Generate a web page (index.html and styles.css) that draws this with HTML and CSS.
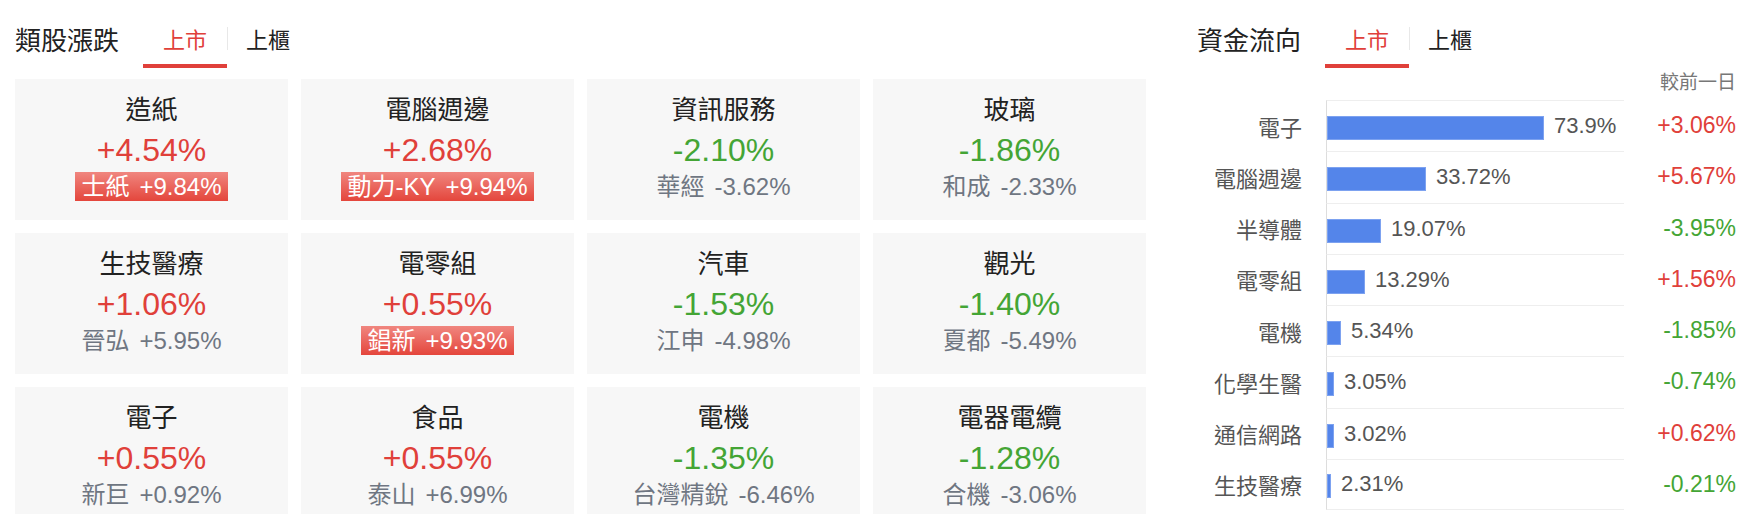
FILE: index.html
```html
<!DOCTYPE html>
<html>
<head>
	<title>類股漲跌</title>
	<meta charset="utf-8">
	<link rel="stylesheet" href="styles.css">
</head>
<body>

	<div class="boxPage">

		<!-- LEFT: sectors up / down -->
		<div class="boxSectorsPanel">

			<div class="boxHead">
				<div class="lblHeadTitle">類股漲跌</div>
				<div class="boxTabs">
					<span class="tab tabActive">上市</span>
					<span class="tabLine"></span>
					<span class="tab tabSecond">上櫃</span>
				</div>
			</div>

			<div class="boxSectors">

				<div class="boxSector">
					<div class="lblSectorName">造紙</div>
					<div class="lblSectorChange up">+4.54%</div>
					<div class="lblTopStock limitUp">士紙<span class="lblStockChange">+9.84%</span></div>
				</div>

				<div class="boxSector">
					<div class="lblSectorName">電腦週邊</div>
					<div class="lblSectorChange up">+2.68%</div>
					<div class="lblTopStock limitUp">動力-KY<span class="lblStockChange">+9.94%</span></div>
				</div>

				<div class="boxSector">
					<div class="lblSectorName">資訊服務</div>
					<div class="lblSectorChange down">-2.10%</div>
					<div class="lblTopStock">華經<span class="lblStockChange">-3.62%</span></div>
				</div>

				<div class="boxSector">
					<div class="lblSectorName">玻璃</div>
					<div class="lblSectorChange down">-1.86%</div>
					<div class="lblTopStock">和成<span class="lblStockChange">-2.33%</span></div>
				</div>

				<div class="boxSector">
					<div class="lblSectorName">生技醫療</div>
					<div class="lblSectorChange up">+1.06%</div>
					<div class="lblTopStock">晉弘<span class="lblStockChange">+5.95%</span></div>
				</div>

				<div class="boxSector">
					<div class="lblSectorName">電零組</div>
					<div class="lblSectorChange up">+0.55%</div>
					<div class="lblTopStock limitUp">錩新<span class="lblStockChange">+9.93%</span></div>
				</div>

				<div class="boxSector">
					<div class="lblSectorName">汽車</div>
					<div class="lblSectorChange down">-1.53%</div>
					<div class="lblTopStock">江申<span class="lblStockChange">-4.98%</span></div>
				</div>

				<div class="boxSector">
					<div class="lblSectorName">觀光</div>
					<div class="lblSectorChange down">-1.40%</div>
					<div class="lblTopStock">夏都<span class="lblStockChange">-5.49%</span></div>
				</div>

				<div class="boxSector">
					<div class="lblSectorName">電子</div>
					<div class="lblSectorChange up">+0.55%</div>
					<div class="lblTopStock">新巨<span class="lblStockChange">+0.92%</span></div>
				</div>

				<div class="boxSector">
					<div class="lblSectorName">食品</div>
					<div class="lblSectorChange up">+0.55%</div>
					<div class="lblTopStock">泰山<span class="lblStockChange">+6.99%</span></div>
				</div>

				<div class="boxSector">
					<div class="lblSectorName">電機</div>
					<div class="lblSectorChange down">-1.35%</div>
					<div class="lblTopStock">台灣精銳<span class="lblStockChange">-6.46%</span></div>
				</div>

				<div class="boxSector">
					<div class="lblSectorName">電器電纜</div>
					<div class="lblSectorChange down">-1.28%</div>
					<div class="lblTopStock">合機<span class="lblStockChange">-3.06%</span></div>
				</div>

			</div>
		</div>

		<!-- RIGHT: money flow -->
		<div class="boxFlowPanel">

			<div class="boxHead">
				<div class="lblHeadTitle">資金流向</div>
				<div class="boxTabs">
					<span class="tab tabActive">上市</span>
					<span class="tabLine"></span>
					<span class="tab tabSecond">上櫃</span>
				</div>
			</div>

			<div class="lblFlowHead">較前一日</div>

			<div class="boxFlow">

				<div class="flowRow">
					<span class="lblFlowName">電子</span>
					<div class="flowTrack"><span class="flowBar" style="width:217px"></span><span class="lblFlowPct">73.9%</span></div>
					<span class="lblFlowChange up">+3.06%</span>
				</div>

				<div class="flowRow">
					<span class="lblFlowName">電腦週邊</span>
					<div class="flowTrack"><span class="flowBar" style="width:99px"></span><span class="lblFlowPct">33.72%</span></div>
					<span class="lblFlowChange up">+5.67%</span>
				</div>

				<div class="flowRow">
					<span class="lblFlowName">半導體</span>
					<div class="flowTrack"><span class="flowBar" style="width:54px"></span><span class="lblFlowPct">19.07%</span></div>
					<span class="lblFlowChange down">-3.95%</span>
				</div>

				<div class="flowRow">
					<span class="lblFlowName">電零組</span>
					<div class="flowTrack"><span class="flowBar" style="width:38px"></span><span class="lblFlowPct">13.29%</span></div>
					<span class="lblFlowChange up">+1.56%</span>
				</div>

				<div class="flowRow">
					<span class="lblFlowName">電機</span>
					<div class="flowTrack"><span class="flowBar" style="width:14px"></span><span class="lblFlowPct">5.34%</span></div>
					<span class="lblFlowChange down">-1.85%</span>
				</div>

				<div class="flowRow">
					<span class="lblFlowName">化學生醫</span>
					<div class="flowTrack"><span class="flowBar" style="width:7px"></span><span class="lblFlowPct">3.05%</span></div>
					<span class="lblFlowChange down">-0.74%</span>
				</div>

				<div class="flowRow">
					<span class="lblFlowName">通信網路</span>
					<div class="flowTrack"><span class="flowBar" style="width:7px"></span><span class="lblFlowPct">3.02%</span></div>
					<span class="lblFlowChange up">+0.62%</span>
				</div>

				<div class="flowRow">
					<span class="lblFlowName">生技醫療</span>
					<div class="flowTrack"><span class="flowBar" style="width:4px"></span><span class="lblFlowPct">2.31%</span></div>
					<span class="lblFlowChange down">-0.21%</span>
				</div>

			</div>
		</div>

	</div>

</body>
</html>
```

FILE: styles.css
```css
*{
	margin: 0px;
	padding: 0px;
	box-sizing: border-box;
}

body{
	width: 100vw;
	height: 100vh;
	overflow: hidden;
	background-color: white;
	color: #222222;
	font-family: "Liberation Sans", "Noto Sans CJK TC", sans-serif;
}

.boxPage{
	display: flex;
	gap: 51px;
	padding: 0px 18px 0px 15px;
}

/* header with title + tabs */
.boxHead{
	display: flex;
	height: 68px;
}
.lblHeadTitle{
	display: flex;
	align-items: center;
	width: 104px;
	padding: 12px 0px 4px 0px;
	font-size: 26px;
	color: #222222;
}
.boxTabs{
	display: flex;
	align-items: center;
	margin-left: 24px;
}
.tab{
	display: flex;
	align-items: center;
	height: 100%;
	padding: 12px 20px 0px 20px;
	border-bottom: 4px solid transparent;
	font-size: 22px;
	color: #222222;
}
.tabActive{
	color: #e0403a;
	border-bottom-color: #e0403a;
}
.tabSecond{
	padding-left: 18px;
}
.tabLine{
	width: 1px;
	height: 23px;
	margin-top: 8px;
	background-color: #e8e8e8;
}

/* sector cards */
.boxSectorsPanel{
	width: 1131px;
}
.boxSectors{
	display: grid;
	grid-template-columns: repeat(4, 273px);
	grid-auto-rows: 141px;
	gap: 13px;
	margin-top: 11px;
}
.boxSector{
	display: flex;
	flex-direction: column;
	align-items: center;
	padding-top: 14px;
	background-color: #f7f7f7;
}
.lblSectorName{
	font-size: 26px;
	line-height: 34px;
	color: #222222;
}
.lblSectorChange{
	margin-top: 3px;
	font-size: 32px;
	line-height: 40px;
}
.lblTopStock{
	margin-top: 2px;
	padding: 0px 6px;
	font-size: 24px;
	line-height: 29px;
	color: #6f7682;
	white-space: nowrap;
}
.lblStockChange{
	margin-left: 10px;
}
.limitUp{
	color: white;
	background: linear-gradient(#f0867f, #e4463c);
}

.up{
	color: #e0403a;
}
.down{
	color: #44a535;
}

/* money flow chart */
.boxFlowPanel{
	width: 539px;
}
.lblFlowHead{
	height: 32px;
	line-height: 30px;
	text-align: right;
	font-size: 19px;
	color: #777777;
}
.boxFlow{
	display: flex;
	flex-direction: column;
}
.flowRow{
	display: flex;
	align-items: center;
	height: 51.25px;
}
.flowRow:last-child .flowTrack{
	border-bottom: 1px solid #eeeeee;
}
.lblFlowName{
	width: 105px;
	margin-right: 24px;
	text-align: right;
	font-size: 22px;
	color: #555555;
}
.flowTrack{
	display: flex;
	align-items: center;
	align-self: stretch;
	width: 298px;
	border-top: 1px solid #eeeeee;
	border-left: 1px solid #dddddd;
}
.flowBar{
	height: 24px;
	margin-top: 4px;
	background-color: #5485ea;
	box-shadow: inset 0px 0px 0px 1px #7da2f0;
}
.lblFlowPct{
	margin-left: 10px;
	font-size: 22px;
	color: #555555;
}
.lblFlowChange{
	flex: 1;
	text-align: right;
	font-size: 23px;
}
```
